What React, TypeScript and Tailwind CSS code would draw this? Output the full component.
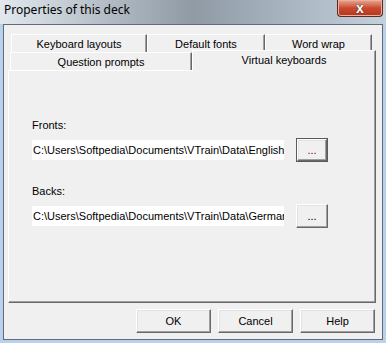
import React from "react";

// ---------------------------------------------------------------------------
// Classic Win32 bits
// ---------------------------------------------------------------------------

const raised =
  "border border-t-white border-l-white border-r-[#696969] border-b-[#696969] shadow-[inset_-1px_-1px_0_#a0a0a0,inset_1px_1px_0_#e3e3e3]";

function PushButton({ label, className = "", isDefault = false }: { label: string; className?: string; isDefault?: boolean }) {
  if (isDefault) {
    return (
      <div className={`flex items-center justify-center border border-[#5a5a5a] bg-[#f0f0f0] ${className}`}>
        <div className={`flex h-full w-full items-center justify-center ${raised}`}>
          <span className="leading-none text-[#800000]">{label}</span>
        </div>
      </div>
    );
  }
  return (
    <div className={`flex items-center justify-center bg-[#f0f0f0] ${raised} ${className}`}>
      <span className="leading-none">{label}</span>
    </div>
  );
}

function Tab({ label, width, selected = false }: { label: string; width: number; selected?: boolean }) {
  return (
    <div
      className={`flex shrink-0 items-center justify-center border-l border-t border-r border-l-white border-t-white border-r-[#696969] bg-[#f0f0f0] shadow-[inset_-1px_0_0_#a0a0a0] ${
        selected ? "relative z-10 -mb-px h-[21px] pb-px" : "h-[18px] pt-[2px]"
      }`}
      style={{ width }}
    >
      {label}
    </div>
  );
}

function PathField({ label, value, isDefault = false }: { label: string; value: string; isDefault?: boolean }) {
  return (
    <div className="flex flex-col">
      <div className="h-[13px] leading-[13px]">{label}</div>
      <div className="mt-[6px] flex items-center">
        <div className="h-[20px] w-[252px] overflow-hidden whitespace-nowrap bg-white pl-px leading-[20px]">
          {value}
        </div>
        <PushButton label="..." isDefault={isDefault} className="ml-[12px] h-[24px] w-[32px]" />
      </div>
    </div>
  );
}

// ---------------------------------------------------------------------------
// Dialog
// ---------------------------------------------------------------------------

export default function App() {
  return (
    <div
      className="flex h-[343px] w-[386px] flex-col overflow-hidden bg-[#b9d1ea] text-[11px] text-black"
      style={{ fontFamily: '"Liberation Sans", Arial, sans-serif' }}
    >
      {/* Title bar */}
      <div className="flex h-[24px] shrink-0 items-start justify-between bg-gradient-to-r from-[#e2e8ee] via-[#8f9aa5] to-[#c3d1dd] pl-[4px] pr-[3px]">
        <span
          className="mt-[2px] text-[12px] leading-[16px] text-black"
          style={{ fontFamily: '"Noto Sans", "Open Sans", sans-serif' }}
        >
          Properties of this deck
        </span>
        <div className="flex h-[17px] w-[46px] items-center justify-center rounded-b-[4px] border border-t-0 border-[#5b2a22] bg-gradient-to-b from-[#e8a793] via-[#c94a2f] to-[#b8321b] shadow-[inset_0_0_0_1px_#e8b1a2]">
          <span className="text-[14px] font-bold leading-none text-white [text-shadow:0_0_1px_#333,0_0_1px_#333]">
            x
          </span>
        </div>
      </div>

      {/* Client area */}
      <div className="mx-[3px] mb-[3px] flex flex-1 flex-col border border-[#5f6b78] bg-[#f0f0f0] pl-[4px] pr-[4px]">
        {/* Tab control */}
        <div className="mt-[9px] flex w-[368px] flex-col">
          <div className="flex h-[18px] pl-[3px]">
            <Tab label="Keyboard layouts" width={136} />
            <Tab label="Default fonts" width={118} />
            <Tab label="Word wrap" width={107} />
          </div>
          <div className="flex h-[18px] items-end pl-[2px]">
            <Tab label="Question prompts" width={182} />
            <Tab label="Virtual keyboards" width={184} selected />
          </div>
          <div className="h-[233px] border border-t-white border-l-white border-r-[#696969] border-b-[#696969] pl-[23px] pt-[48px] shadow-[inset_-1px_-1px_0_#a0a0a0]">
            <PathField label="Fronts:" value="C:\Users\Softpedia\Documents\VTrain\Data\English" isDefault />
            <div className="mt-[23px]">
              <PathField label="Backs:" value="C:\Users\Softpedia\Documents\VTrain\Data\German" />
            </div>
          </div>
        </div>

        {/* Buttons */}
        <div className="mt-[6px] flex w-[368px] justify-end gap-[7px] pr-px">
          <PushButton label="OK" className="h-[24px] w-[75px]" />
          <PushButton label="Cancel" className="h-[24px] w-[75px]" />
          <PushButton label="Help" className="h-[24px] w-[75px]" />
        </div>
      </div>
    </div>
  );
}
